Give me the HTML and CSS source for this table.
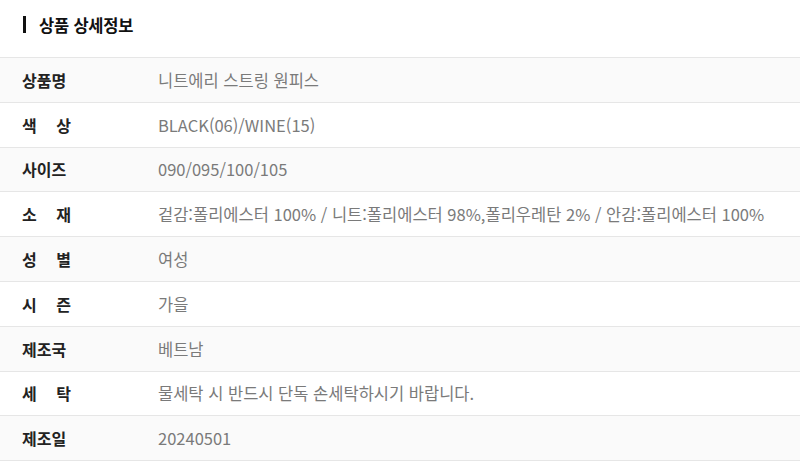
FILE: index.html
```html
<!DOCTYPE html>
<html lang="ko">
<head>
<meta charset="utf-8">
<link rel="stylesheet" href="styles.css">
</head>
<body>
<div class="page">
  <h2 class="title">상품 상세정보</h2>
  <div class="table">
    <div class="row"><span class="label">상품명</span><span class="value">니트에리 스트링 원피스</span></div>
    <div class="row"><span class="label">색 상</span><span class="value">BLACK(06)/WINE(15)</span></div>
    <div class="row"><span class="label">사이즈</span><span class="value">090/095/100/105</span></div>
    <div class="row"><span class="label">소 재</span><span class="value">겉감:폴리에스터 100% / 니트:폴리에스터 98%,폴리우레탄 2% / 안감:폴리에스터 100%</span></div>
    <div class="row"><span class="label">성 별</span><span class="value">여성</span></div>
    <div class="row"><span class="label">시 즌</span><span class="value">가을</span></div>
    <div class="row"><span class="label">제조국</span><span class="value">베트남</span></div>
    <div class="row"><span class="label">세 탁</span><span class="value">물세탁 시 반드시 단독 손세탁하시기 바랍니다.</span></div>
    <div class="row"><span class="label">제조일</span><span class="value">20240501</span></div>
  </div>
</div>
</body>
</html>
```
FILE: styles.css
```css
* { box-sizing: border-box; }
html, body { margin: 0; padding: 0; background: #fff; }
body { font-family: "Noto Sans CJK KR", "Noto Sans", sans-serif; overflow: hidden; }
.page { width: 800px; }
.title {
  margin: 0;
  height: 57px;
  display: flex;
  align-items: center;
  padding: 0 0 8px 23px;
  font-size: 16.5px;
  font-weight: 700;
  color: #111;
  letter-spacing: -0.2px;
}
.title::before {
  content: "";
  width: 3px;
  height: 17px;
  background: #111;
  margin-right: 13px;
}
.table { border-top: 1px solid #e6e6e6; }
.row {
  display: flex;
  align-items: center;
  height: 44.8px;
  border-bottom: 1px solid #e6e6e6;
  padding-left: 22px;
}
.row:nth-child(odd) { background: #fafafa; }
.label {
  display: inline-block;
  width: 49px;
  text-align: justify;
  text-align-last: justify;
  font-size: 16px;
  font-weight: 700;
  color: #222;
  margin-right: 87px;
}
.value {
  font-size: 16.5px;
  color: #7a7a7a;
  letter-spacing: 0;
}
```
